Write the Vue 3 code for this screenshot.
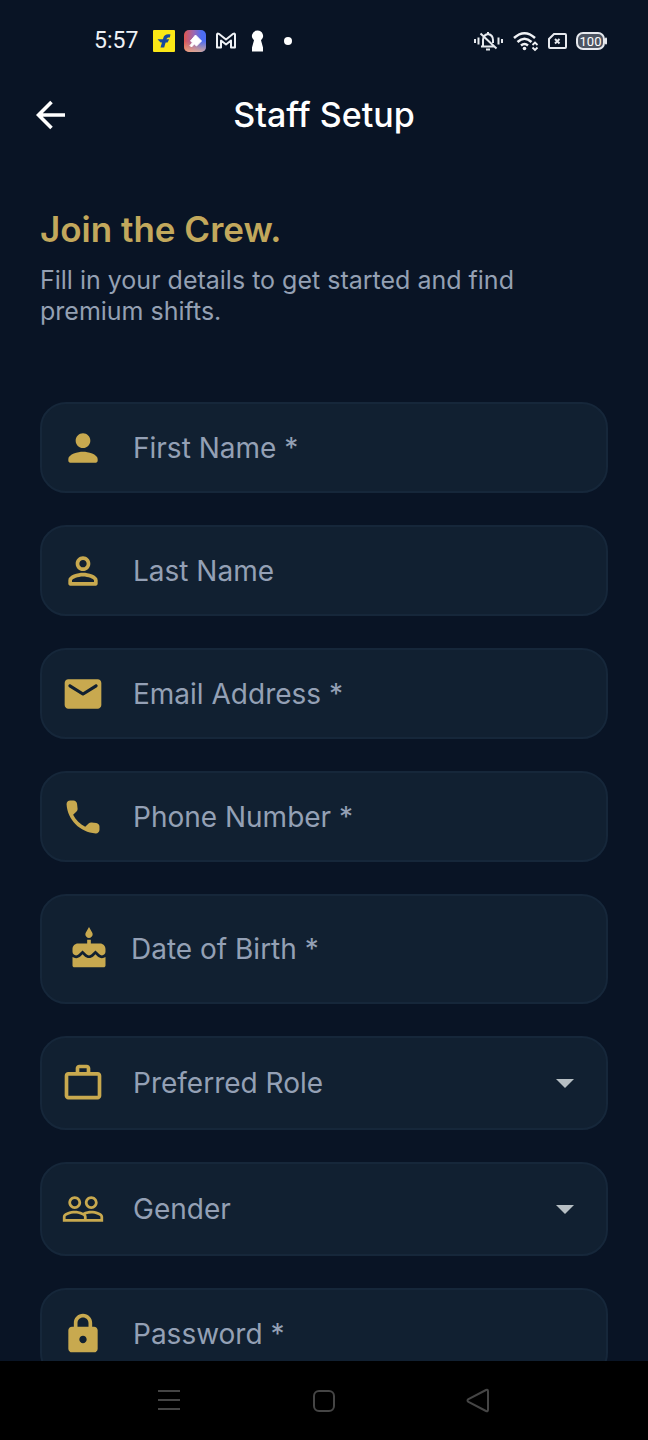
<script setup>
import { reactive } from 'vue'

const icons = {
  person: 'M12 12c2.21 0 4-1.79 4-4s-1.79-4-4-4-4 1.79-4 4 1.79 4 4 4zm0 2c-2.67 0-8 1.34-8 4v1c0 .55.45 1 1 1h14c.55 0 1-.45 1-1v-1c0-2.66-5.33-4-8-4z',
  personOutline: 'M12 6c1.1 0 2 .9 2 2s-.9 2-2 2-2-.9-2-2 .9-2 2-2m0 9c2.7 0 5.8 1.29 6 2v1H6v-.99c.2-.72 3.3-2.01 6-2.01m0-11C9.79 4 8 5.79 8 8s1.79 4 4 4 4-1.79 4-4-1.79-4-4-4zm0 9c-2.67 0-8 1.34-8 4v2c0 .55.45 1 1 1h14c.55 0 1-.45 1-1v-2c0-2.66-5.33-4-8-4z',
  mail: 'M20 4H4c-1.1 0-1.99.9-1.99 2L2 18c0 1.1.9 2 2 2h16c1.1 0 2-.9 2-2V6c0-1.1-.9-2-2-2zm-.4 4.25l-7.07 4.42c-.32.2-.74.2-1.06 0L4.4 8.25c-.25-.16-.4-.43-.4-.72 0-.67.73-1.07 1.3-.72L12 11l6.7-4.19c.57-.35 1.3.05 1.3.72 0 .29-.15.56-.4.72z',
  phone: 'M19.23 15.26l-2.54-.29c-.61-.07-1.21.14-1.64.57l-1.84 1.84c-2.83-1.44-5.15-3.75-6.59-6.59l1.85-1.85c.43-.43.64-1.03.57-1.64l-.29-2.52c-.12-1.01-.97-1.77-1.99-1.77H5.03c-1.13 0-2.07.94-2 2.07.53 8.54 7.36 15.36 15.89 15.89 1.13.07 2.07-.87 2.07-2v-1.73c.01-1.01-.75-1.86-1.76-1.98z',
  cake: 'M12 6c1.11 0 2-.9 2-2 0-.38-.1-.73-.29-1.03L12 0l-1.71 2.97c-.19.3-.29.65-.29 1.03 0 1.1.9 2 2 2zm4.6 9.99l-1.07-1.07-1.08 1.07c-1.3 1.3-3.58 1.31-4.89 0l-1.07-1.07-1.09 1.07C6.75 16.64 5.88 17 4.96 17c-.73 0-1.4-.23-1.96-.61V21c0 .55.45 1 1 1h16c.55 0 1-.45 1-1v-4.61c-.56.38-1.23.61-1.96.61-.92 0-1.79-.36-2.44-1.01zM18 9h-5V7h-2v2H6c-1.66 0-3 1.34-3 3v1.54c0 1.08.88 1.96 1.96 1.96.52 0 1.02-.2 1.38-.57l2.14-2.13 2.13 2.13c.74.74 2.03.74 2.77 0l2.14-2.13 2.13 2.13c.37.37.86.57 1.38.57 1.08 0 1.96-.88 1.96-1.96V12C21 10.34 19.66 9 18 9z',
  work: 'M14 6V4h-4v2h4zM4 8v11h16V8H4zm16-2c1.11 0 2 .89 2 2v11c0 1.11-.89 2-2 2H4c-1.11 0-2-.89-2-2l.01-11c0-1.11.88-2 1.99-2h4V4c0-1.11.89-2 2-2h4c1.11 0 2 .89 2 2v2h4z',
  people: 'M16.5 13c-1.2 0-3.07.34-4.5 1-1.43-.67-3.3-1-4.5-1C5.33 13 1 14.08 1 16.25V19h22v-2.75c0-2.17-4.33-3.25-6.5-3.25zm-4 4.5h-10v-1.25c0-.54 2.56-1.75 5-1.75s5 1.21 5 1.75v1.25zm9 0H14v-1.25c0-.46-.2-.86-.52-1.22.88-.3 1.96-.53 3.02-.53 2.44 0 5 1.21 5 1.75v1.25zM7.5 12c1.93 0 3.5-1.57 3.5-3.5S9.43 5 7.5 5 4 6.57 4 8.5 5.57 12 7.5 12zm0-5.5c1.1 0 2 .9 2 2s-.9 2-2 2-2-.9-2-2 .9-2 2-2zm9 5.5c1.93 0 3.5-1.57 3.5-3.5S18.43 5 16.5 5 13 6.57 13 8.5s1.57 3.5 3.5 3.5zm0-5.5c1.1 0 2 .9 2 2s-.9 2-2 2-2-.9-2-2 .9-2 2-2z',
  lock: 'M18 8h-1V6c0-2.76-2.24-5-5-5S7 3.24 7 6v2H6c-1.1 0-2 .9-2 2v10c0 1.1.9 2 2 2h12c1.1 0 2-.9 2-2V10c0-1.1-.9-2-2-2zm-6 9c-1.1 0-2-.9-2-2s.9-2 2-2 2 .9 2 2-.9 2-2 2zM9 8V6c0-1.66 1.34-3 3-3s3 1.34 3 3v2H9z'
}

const fields = [
  { id: 'first', label: 'First Name *', icon: 'person', kind: 'text' },
  { id: 'last', label: 'Last Name', icon: 'personOutline', kind: 'text' },
  { id: 'email', label: 'Email Address *', icon: 'mail', kind: 'email' },
  { id: 'phone', label: 'Phone Number *', icon: 'phone', kind: 'tel' },
  { id: 'birth', label: 'Date of Birth *', icon: 'cake', kind: 'picker' },
  { id: 'role', label: 'Preferred Role', icon: 'work', kind: 'select' },
  { id: 'gender', label: 'Gender', icon: 'people', kind: 'select' },
  { id: 'password', label: 'Password *', icon: 'lock', kind: 'password' }
]

const values = reactive(Object.fromEntries(fields.map((f) => [f.id, ''])))
</script>

<template>
  <div class="screen">
    <div class="status">
      <span class="time">5:57</span>
      <div class="group">
        <svg width="22" height="22" viewBox="0 0 22 22">
          <rect width="22" height="22" rx="1" fill="#fbe716" />
          <path d="M17.500 4.500c-4-.8-6.300.3-7.200 3.500L7.500 17.500h3.700l2.300-8.200c.4-1.500 1.300-2 3.300-1.800z" fill="#17489c" />
          <path d="M4.500 9.200h11.700l-1.600 3.300H7.600z" fill="#17489c" />
        </svg>
        <svg width="22" height="22" viewBox="0 0 22 22">
          <defs>
            <linearGradient id="tile" x1="0" y1="0.3" x2="1" y2="0.3">
              <stop offset="0" stop-color="#e0564f" />
              <stop offset="0.45" stop-color="#9a66b4" />
              <stop offset="0.8" stop-color="#4d6df2" />
            </linearGradient>
            <linearGradient id="glow" x1="0" y1="0" x2="0" y2="1">
              <stop offset="0.5" stop-color="#f0b070" stop-opacity="0" />
              <stop offset="1" stop-color="#f0b48a" stop-opacity="0.8" />
            </linearGradient>
          </defs>
          <rect width="22" height="22" rx="5" fill="url(#tile)" />
          <rect width="22" height="22" rx="5" fill="url(#glow)" />
          <path d="M11.500 5l6 6-5 5-2.200-2-2.800 3-1.500-1.500 2.500-2.800L6.500 11z" fill="#fff" stroke="#fff" stroke-linejoin="round" />
        </svg>
        <svg width="22" height="22" viewBox="0 0 22 22">
          <path d="M2 4.500q0-1.500 1.800-.7L11 9.500l7.200-5.700Q20 3 20 4.500V17.500h-4V10.500l-5 4-5-4v7H2z" fill="none" stroke="#eef1f5" stroke-width="2" stroke-linejoin="round" />
        </svg>
        <svg width="22" height="22" viewBox="0 0 22 22">
          <path d="M11.500 .5a5.500 5.500 0 0 1 3.500 9.800l2 7.200v4H6v-4l2-7.200A5.500 5.500 0 0 1 11.500.5z" fill="#fff" />
        </svg>
        <svg width="22" height="22" viewBox="0 0 22 22"><circle cx="11" cy="11" r="4" fill="#fff" /></svg>
      </div>
      <div class="group right">
        <svg width="30" height="22" viewBox="0 0 30 22" fill="none" stroke="#e6e9ee" stroke-width="2">
          <path d="M1 9v4M4.500 7.500v7M24.500 7.500v7M28 9v4" />
          <path d="M9 16.500V10q0-5 5-6 5 1 5 6v3M7 16.500h13M14 2v2M12 19.500h4M6.500 3.500l16 15" />
        </svg>
        <svg width="26" height="22" viewBox="0 0 26 22" fill="none" stroke="#f0f2f5" stroke-width="2.500">
          <path d="M1 8q10.500-9.500 21 0M4.500 12q7-6.500 14 0M8 15.500q3.500-3 7 0" />
          <circle cx="11.500" cy="18.500" r="1.800" fill="#f0f2f5" stroke="none" />
          <path d="M19.500 15l2.500-2.500 2.500 2.500M19.500 17.500l2.500 2.500 2.500-2.500" stroke-width="1.800" />
        </svg>
        <svg width="19" height="22" viewBox="0 0 19 22" fill="none" stroke="#e6e9ee" stroke-width="2">
          <path d="M6 4h11q1 0 1 1v12q0 1-1 1H2q-1 0-1-1V9z" />
          <path d="M7 9l4.500 4.500M11.500 9L7 13.500" />
        </svg>
        <svg width="31" height="22" viewBox="0 0 31 22">
          <rect x="1" y="3" width="27" height="16" rx="6" fill="#4d5562" stroke="#e6e9ee" stroke-width="2" />
          <path d="M30 8.500v5" stroke="#e6e9ee" stroke-width="2" stroke-linecap="round" />
          <text x="14.500" y="15.500" text-anchor="middle" class="charge">100</text>
        </svg>
      </div>
    </div>

    <header class="bar">
      <button class="back" type="button" aria-label="Back">
        <svg width="30" height="30" viewBox="0 0 30 30" fill="none" stroke="#fff" stroke-width="3.600">
          <path d="M29 15H3M15.500 2L2.500 15l13 13" />
        </svg>
      </button>
      <h1>Staff Setup</h1>
    </header>

    <main class="content">
      <h2>Join the Crew.</h2>
      <p class="lead">Fill in your details to get started and find premium shifts.</p>

      <form class="form" @submit.prevent>
        <template v-for="f in fields" :key="f.id">
          <button v-if="f.kind === 'picker'" class="field picker" type="button">
            <svg class="icon" viewBox="0 0 24 24"><path :d="icons[f.icon]" /></svg>
            <span>{{ f.label }}</span>
          </button>
          <div v-else class="field" :class="{ choice: f.kind === 'select' }">
            <svg class="icon" viewBox="0 0 24 24"><path :d="icons[f.icon]" /></svg>
            <div class="entry">
              <label :for="f.id" :class="{ filled: values[f.id] }">{{ f.label }}</label>
              <select v-if="f.kind === 'select'" :id="f.id" v-model="values[f.id]">
                <option value=""></option>
              </select>
              <input v-else :id="f.id" v-model="values[f.id]" :type="f.kind" />
            </div>
            <svg v-if="f.kind === 'select'" class="caret" width="18" height="9" viewBox="0 0 18 9">
              <path d="M0 0h18L9 9z" />
            </svg>
          </div>
        </template>
      </form>
    </main>

    <nav class="system">
      <button type="button" aria-label="Recent apps">
        <svg width="26" height="26" viewBox="0 0 26 26"><path d="M2 3h22M2 12h22M2 21h22" /></svg>
      </button>
      <button type="button" aria-label="Home">
        <svg width="26" height="26" viewBox="0 0 26 26"><rect x="3" y="3" width="20" height="20" rx="5" /></svg>
      </button>
      <button type="button" aria-label="Back to previous app">
        <svg width="26" height="26" viewBox="0 0 26 26"><path d="M20 2Q22 1 22 3.500v18q0 2.500-2 1.500L2.500 14Q.5 12.500 2.500 11z" /></svg>
      </button>
    </nav>
  </div>
</template>

<style>
body {
  margin: 0;
  background: #091425;
}
</style>

<style scoped>
.screen {
  display: flex;
  flex-direction: column;
  height: 100vh;
  background: #091425;
  color: #fff;
  font-family: Inter, "Open Sans", sans-serif;
}
.screen * {
  box-sizing: border-box;
}
button,
input,
select {
  margin: 0;
  padding: 0;
  border: 0;
  background: none;
  color: inherit;
  font: inherit;
}
svg {
  display: block;
  flex: none;
}
.status {
  display: flex;
  flex: none;
  align-items: center;
  gap: 15px;
  padding: 26px 41px 0 94px;
}
.time {
  font: 400 23px/30px Roboto, sans-serif;
  color: #eef1f5;
}
.group {
  display: flex;
  gap: 9px;
}
.right {
  margin-left: auto;
}
.charge {
  font: 400 13px Roboto, sans-serif;
  fill: #fff;
}
.bar {
  display: grid;
  flex: none;
  grid-template-columns: 1fr auto 1fr;
  align-items: center;
  padding: 34px 36px 0;
}
.back {
  justify-self: start;
}
h1 {
  margin: 0;
  font-size: 34px;
  font-weight: 500;
  line-height: 50px;
}
.content {
  flex: 1;
  min-height: 0;
  overflow-y: auto;
  scrollbar-width: none;
  padding: 69px 40px 32px;
}
h2 {
  margin: 0;
  color: #c2a85c;
  font-size: 35px;
  font-weight: 600;
  line-height: 40px;
}
.lead {
  margin: 16px 0 75px;
  color: #94a0b3;
  font-size: 25px;
  font-weight: 400;
  line-height: 31px;
}
.form {
  display: flex;
  flex-direction: column;
  gap: 32px;
}
.field {
  display: flex;
  flex: none;
  align-items: center;
  gap: 28px;
  min-height: 91px;
  padding: 0 32px 0 19px;
  border: 2px solid #16273a;
  border-radius: 26px;
  background: #112031;
  color: #94a0b5;
  font-size: 28px;
  line-height: 40px;
  text-align: left;
}
.choice {
  min-height: 94px;
}
.picker {
  gap: 20px;
  min-height: 110px;
  padding-left: 25px;
}
.icon {
  width: 44px;
  height: 44px;
  fill: #c8a94f;
}
.entry {
  display: grid;
  flex: 1;
  min-width: 0;
}
.entry > * {
  grid-area: 1 / 1;
  min-width: 0;
}
.entry label {
  pointer-events: none;
}
.entry .filled {
  visibility: hidden;
}
input,
select {
  width: 100%;
  outline: 0;
  appearance: none;
}
.caret {
  fill: #b7bfc4;
}
.system {
  display: grid;
  flex: none;
  grid-template-columns: repeat(3, 1fr);
  height: 79px;
  padding: 0 92px;
  background: #000;
}
.system button {
  display: grid;
  place-items: center;
}
.system svg {
  fill: none;
  stroke: #454545;
  stroke-width: 2;
}
</style>
